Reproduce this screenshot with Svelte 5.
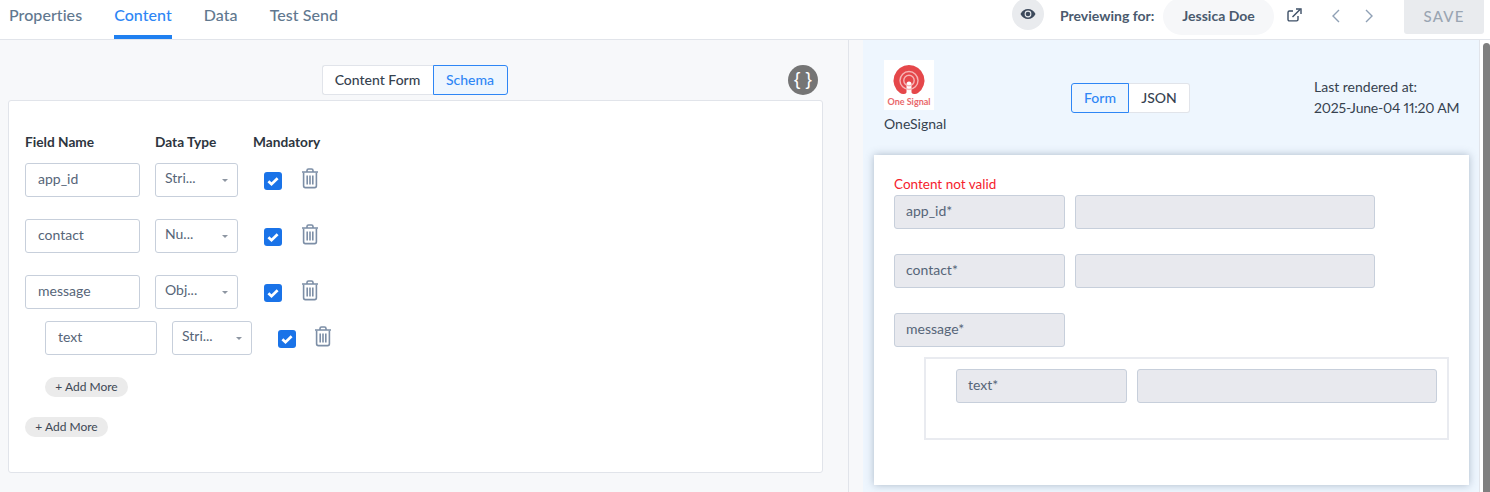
<script>
	const tabs = ['Properties', 'Content', 'Data', 'Test Send'];
	const fields = [
		{ name: 'app_id', type: 'Stri...' },
		{ name: 'contact', type: 'Nu...' },
		{ name: 'message', type: 'Obj...' }
	];
</script>

{#snippet checkbox()}
	<svg class="check" width="18" height="18" viewBox="0 0 18 18">
		<rect width="18" height="18" rx="3" fill="#1a73e8" />
		<path d="M4.400 9.200 7.500 12.200 13.600 6.200" fill="none" stroke="#fff" stroke-width="2.700" />
	</svg>
{/snippet}

{#snippet trash()}
	<svg class="trash" width="18" height="21" viewBox="0 0 18 21" fill="none" stroke="#7c8ea6" stroke-width="1.600">
		<path d="M1 4h16M6 4V2.600C6 1.700 6.600 1 7.500 1h3c.9 0 1.500.7 1.500 1.600V4" />
		<path d="M2.600 4.400v13.400c0 1 .8 1.800 1.800 1.800h9.200c1 0 1.800-.8 1.800-1.800V4.400" />
		<path d="M6.200 7.500v9M9 7.500v9M11.800 7.500v9" />
	</svg>
{/snippet}

{#snippet caret()}
	<span class="caret"></span>
{/snippet}

<div class="page">
	<header class="topbar">
		<nav class="tabs">
			{#each tabs as tab}
				<span class="tab" class:active={tab === 'Content'}>{tab}</span>
			{/each}
		</nav>
		<div class="preview">
			<span class="eye">
				<svg width="16" height="12" viewBox="0 0 16 12">
					<path d="M0.500 6C2.200 2.600 4.900 1 8 1s5.800 1.600 7.500 5c-1.700 3.400-4.400 5-7.500 5S2.200 9.400.5 6z" fill="#3d4a5c" />
					<circle cx="8" cy="6" r="3.400" fill="#e9ebee" />
					<circle cx="8" cy="6" r="2.300" fill="#3d4a5c" />
				</svg>
			</span>
			<span class="for">Previewing for:</span>
			<span class="person">Jessica Doe</span>
			<svg class="ext" width="15" height="14" viewBox="0 0 15 14" fill="none" stroke="#3d4f66" stroke-width="1.400">
				<path d="M11 8v3.500c0 .8-.6 1.400-1.400 1.400H2.400C1.600 12.900 1 12.300 1 11.500V4.400C1 3.600 1.600 3 2.400 3H6" />
				<path d="M5.500 9 13 1.500" />
				<path d="M9 1h5v5" />
			</svg>
			<svg class="chev left" width="8" height="14" viewBox="0 0 8 14" fill="none" stroke="#8fa0b5" stroke-width="1.400"><path d="M7 1 1 7l6 6" /></svg>
			<svg class="chev right" width="8" height="14" viewBox="0 0 8 14" fill="none" stroke="#8fa0b5" stroke-width="1.400"><path d="M1 1l6 6-6 6" /></svg>
			<span class="save">SAVE</span>
		</div>
	</header>

	<div class="body">
		<section class="editor">
			<div class="editor-top">
				<div class="seg">
					<span class="seg-btn plain first">Content Form</span>
					<span class="seg-btn on last">Schema</span>
				</div>
				<span class="braces">{'{ }'}</span>
			</div>
			<div class="card">
				<div class="heads">
					<span class="h-name">Field Name</span>
					<span class="h-type">Data Type</span>
					<span>Mandatory</span>
				</div>
				{#each fields as f}
					<div class="row">
						<span class="input">{f.name}</span>
						<span class="select">{f.type}{@render caret()}</span>
						{@render checkbox()}
						{@render trash()}
					</div>
				{/each}
				<div class="row nested">
					<span class="input">text</span>
					<span class="select">Stri...{@render caret()}</span>
					{@render checkbox()}
					{@render trash()}
				</div>
				<span class="add inner">+ Add More</span>
				<span class="add">+ Add More</span>
			</div>
		</section>

		<div class="split"></div>

		<section class="render">
			<div class="render-top">
				<div class="brand">
					<svg class="logo" width="50" height="50" viewBox="0 0 50 50">
						<rect width="50" height="50" fill="#fff" />
						<path d="M25 5a15.500 15.500 0 0 1 9 28.100c-1.500 1-3.500.9-5 .6-1.200-.2-1.500-1-1.500-2V24a2.500 2.500 0 0 0-5 0v7.700c0 1-.3 1.800-1.500 2-1.500.3-3.500.4-5-.6A15.500 15.500 0 0 1 25 5z" fill="#e5474a" />
						<circle cx="25" cy="20.500" r="9" fill="none" stroke="#f6b5b5" stroke-width="1.400" />
						<circle cx="25" cy="20.500" r="5.200" fill="none" stroke="#f6b5b5" stroke-width="1.400" />
						<text x="25" y="44.500" text-anchor="middle" class="logo-text">One Signal</text>
					</svg>
					<span class="brand-name">OneSignal</span>
				</div>
				<div class="seg small">
					<span class="seg-btn on first">Form</span>
					<span class="seg-btn plain last">JSON</span>
				</div>
				<div class="stamp">Last rendered at:<br /><span class="date">2025-June-04 11:20 AM</span></div>
			</div>
			<div class="sheet">
				<div class="invalid">Content not valid</div>
				<div class="pair first-pair">
					<span class="label">app_id*</span>
					<span class="value"></span>
				</div>
				<div class="pair">
					<span class="label">contact*</span>
					<span class="value"></span>
				</div>
				<div class="pair">
					<span class="label">message*</span>
				</div>
				<div class="group">
					<div class="pair inner-pair">
						<span class="label">text*</span>
						<span class="value"></span>
					</div>
				</div>
			</div>
		</section>

		<aside class="scroll"><span class="thumb"></span></aside>
	</div>
</div>

<style>
	:global(body) {
		margin: 0;
		font-family: Lato, 'Open Sans', sans-serif;
		color: #2d3540;
	}
	.page {
		width: 1490px;
		height: 492px;
		overflow: hidden;
		background: #fff;
		font-size: 14px;
	}
	.topbar {
		height: 39px;
		border-bottom: 1px solid #e1e4ea;
		display: flex;
		justify-content: space-between;
	}
	.tabs {
		display: flex;
		gap: 32px;
		padding-left: 9px;
	}
	.tab {
		font-size: 16px;
		font-weight: 500;
		letter-spacing: 0.05px;
		line-height: 30px;
		height: 35px;
		color: #61788f;
	}
	.tab.active {
		color: #2e86f5;
		border-bottom: 4px solid #2080f0;
	}
	.preview {
		display: flex;
		align-items: flex-start;
		margin-right: 6px;
	}
	.eye {
		width: 32px;
		height: 32px;
		margin-top: -2px;
		border-radius: 50%;
		background: #e9ebee;
		display: grid;
		place-items: center;
	}
	.for {
		margin-left: 16px;
		width: 95px;
		white-space: nowrap;
		font-weight: 700;
		font-size: 14px;
		line-height: 31px;
		color: #4a5a6e;
	}
	.person {
		margin-left: 8px;
		width: 111px;
		height: 37px;
		margin-top: -2px;
		line-height: 35px;
		text-align: center;
		border-radius: 19px;
		background: #f6f7f9;
		font-weight: 700;
		font-size: 14px;
		color: #4a5a6e;
	}
	.ext {
		margin: 8px 0 0 13px;
	}
	.chev.left {
		margin: 9px 0 0 30px;
	}
	.chev.right {
		margin: 9px 0 0 25px;
	}
	.save {
		margin: -2px 0 0 31px;
		width: 80px;
		height: 36px;
		line-height: 36px;
		text-align: center;
		border-radius: 3px;
		background: #e9ebee;
		color: #9aa5b2;
		font-size: 15px;
		font-weight: 500;
		letter-spacing: 1.200px;
	}
	.body {
		display: flex;
		height: 452px;
	}
	.editor {
		width: 848px;
		background: #f7f8fa;
		box-sizing: border-box;
		padding: 0 25px 0 8px;
	}
	.editor-top {
		height: 60px;
		display: flex;
		justify-content: center;
		padding: 25px 2px 0 0;
		box-sizing: border-box;
		position: relative;
	}
	.seg {
		display: flex;
		height: 30px;
		font-size: 14px;
	}
	.seg-btn {
		box-sizing: border-box;
		line-height: 28px;
		text-align: center;
		font-weight: 500;
		border: 1px solid;
	}
	.seg-btn.first {
		border-radius: 3px 0 0 3px;
	}
	.seg-btn.last {
		border-radius: 0 3px 3px 0;
	}
	.seg-btn.plain {
		background: #fff;
		border-color: #e1e4ea;
		color: #36424f;
	}
	.seg-btn.on {
		background: #eef6fe;
		border-color: #2e86f5;
		color: #2e86f5;
	}
	.editor .seg-btn.plain {
		width: 111px;
		border-right: 0;
	}
	.editor .seg-btn.on {
		width: 75px;
	}
	.small .seg-btn.on {
		width: 58px;
	}
	.small .seg-btn.plain {
		width: 61px;
		border-left: 0;
	}
	.braces {
		position: absolute;
		right: 5px;
		top: 25px;
		width: 30px;
		height: 30px;
		border-radius: 50%;
		background: #757575;
		color: #fff;
		text-align: center;
		line-height: 28px;
		font-size: 19px;
		font-family: 'Liberation Sans', sans-serif;
	}
	.card {
		width: 815px;
		height: 373px;
		box-sizing: border-box;
		padding: 33px 16px 0;
		background: #fff;
		border: 1px solid #e1e4ea;
		border-radius: 3px;
		display: flex;
		flex-direction: column;
		align-items: flex-start;
	}
	.heads {
		display: flex;
		font-weight: 700;
		font-size: 13.700px;
		line-height: 16px;
		color: #2d3540;
	}
	.h-name {
		width: 130px;
	}
	.h-type {
		width: 98px;
	}
	.row {
		display: flex;
		align-items: flex-start;
		height: 34px;
		margin-top: 22px;
	}
	.heads + .row {
		margin-top: 13px;
	}
	.input,
	.select {
		box-sizing: border-box;
		height: 34px;
		background: #fff;
		border: 1px solid #c7cfdb;
		border-radius: 3px;
		font-size: 14px;
		line-height: 30px;
		color: #566578;
	}
	.input {
		width: 115px;
		padding-left: 12px;
	}
	.select {
		width: 83px;
		margin-left: 15px;
		padding-left: 9px;
		position: relative;
		line-height: 28px;
	}
	.caret {
		position: absolute;
		right: 9px;
		top: 15px;
		border: 3px solid transparent;
		border-top: 3.500px solid #8d96a2;
		border-bottom: 0;
	}
	.check {
		margin: 9px 0 0 26px;
		flex: none;
	}
	.trash {
		margin: 5px 0 0 19px;
		flex: none;
	}
	.nested {
		margin: 12px 0 0 20px;
	}
	.nested .input {
		width: 112px;
	}
	.nested .select {
		width: 80px;
		margin-left: 15px;
	}
	.nested .trash {
		margin-left: 18px;
	}
	.add {
		margin-top: 20px;
		width: 83px;
		height: 20px;
		line-height: 20px;
		border-radius: 10px;
		background: #ebebeb;
		text-align: center;
		font-size: 12px;
		color: #3d4854;
	}
	.add.inner {
		margin: 22px 0 0 20px;
	}
	.split {
		width: 15px;
		box-sizing: border-box;
		background: #f7f8fa;
		border-left: 1px solid #e1e4ea;
	}
	.render {
		width: 616px;
		background: #eef6fe;
		padding: 0 0 0 11px;
		box-sizing: border-box;
	}
	.render-top {
		height: 115px;
		display: flex;
		align-items: flex-start;
	}
	.brand {
		margin: 20px 0 0 10px;
		width: 187px;
		display: flex;
		flex-direction: column;
		font-size: 14px;
		color: #36424f;
	}
	.logo {
		display: block;
	}
	.logo-text {
		font-size: 9px;
		font-weight: 700;
		fill: #e9686b;
	}
	.brand-name {
		margin-top: 5px;
		line-height: 17px;
	}
	.small {
		margin-top: 43px;
	}
	.stamp {
		margin: 36px 0 0 124px;
		font-size: 14px;
		line-height: 21px;
		color: #36424f;
		white-space: nowrap;
		font-variant-numeric: proportional-nums;
	}
	.date {
		letter-spacing: -0.2px;
	}
	.sheet {
		width: 595px;
		height: 330px;
		box-sizing: border-box;
		background: #fff;
		box-shadow: 0 0 8px rgba(90, 110, 135, 0.45);
		padding: 21px 20px 0;
	}
	.invalid {
		color: #f5222d;
		font-size: 13.500px;
		line-height: 17px;
	}
	.pair {
		display: flex;
		gap: 10px;
		margin-top: 25px;
	}
	.first-pair {
		margin-top: 2px;
	}
	.label,
	.value {
		box-sizing: border-box;
		height: 34px;
		background: #e8e9ee;
		border: 1px solid #c7cfdb;
		border-radius: 3px;
	}
	.label {
		width: 171px;
		padding-left: 11px;
		font-size: 14px;
		line-height: 30px;
		color: #566578;
	}
	.value {
		width: 300px;
	}
	.group {
		box-sizing: border-box;
		width: 525px;
		height: 83px;
		margin: 10px 0 0 30px;
		border: 2px solid #e9ebf0;
		padding: 10px 10px 0 30px;
	}
	.inner-pair {
		margin-top: 0;
	}
	.scroll {
		width: 11px;
		background: #fff;
		border-left: 1px solid #e1e4ea;
		box-sizing: border-box;
	}
	.thumb {
		display: block;
		width: 7px;
		height: 452px;
		margin: 3px 0 0 3px;
		border-radius: 4px;
		background: #7f7f7f;
	}
</style>
